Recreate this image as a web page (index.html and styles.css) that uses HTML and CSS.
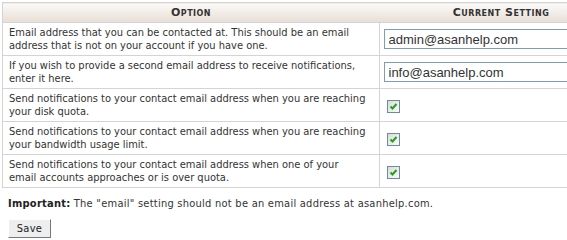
FILE: index.html
```html
<!DOCTYPE html>
<html lang="en">
<head>
<meta charset="UTF-8" />
<title>Contact Information</title>
<link rel="stylesheet" href="styles.css">
</head>
<body>

<!-- Contact settings table -->
<table class="settings">
  <thead>
    <tr>
      <th class="col-option">Option</th>
      <th class="col-setting">Current Setting</th>
    </tr>
  </thead>
  <tbody>
    <tr>
      <td>Email address that you can be contacted at. This should be an email address that is not on your account if you have one.</td>
      <td><input type="text" class="text-input" value="admin@asanhelp.com" /></td>
    </tr>
    <tr>
      <td>If you wish to provide a second email address to receive notifications, enter it here.</td>
      <td><input type="text" class="text-input" value="info@asanhelp.com" /></td>
    </tr>
    <tr>
      <td>Send notifications to your contact email address when you are reaching your disk quota.</td>
      <td><span class="check"><svg width="9" height="9" viewBox="0 0 9 9"><path d="M1.5 4.5 L3.5 6.5 L7.5 2" fill="none" stroke="#21a121" stroke-width="2"/></svg></span></td>
    </tr>
    <tr>
      <td>Send notifications to your contact email address when you are reaching your bandwidth usage limit.</td>
      <td><span class="check"><svg width="9" height="9" viewBox="0 0 9 9"><path d="M1.5 4.5 L3.5 6.5 L7.5 2" fill="none" stroke="#21a121" stroke-width="2"/></svg></span></td>
    </tr>
    <tr>
      <td>Send notifications to your contact email address when one of your email accounts approaches or is over quota.</td>
      <td><span class="check"><svg width="9" height="9" viewBox="0 0 9 9"><path d="M1.5 4.5 L3.5 6.5 L7.5 2" fill="none" stroke="#21a121" stroke-width="2"/></svg></span></td>
    </tr>
  </tbody>
</table>

<div class="footer">
  <p class="note"><b>Important:</b> The "email" setting should not be an email address at asanhelp.com.</p>
  <button class="save-button">Save</button>
</div>

</body>
</html>
```

FILE: styles.css
```css
body {
  margin: 0;
  padding: 2px;
  overflow: hidden;
  font-family: "DejaVu Sans Condensed", "DejaVu Sans", Tahoma, sans-serif;
  font-size: 11px;
  color: #333;
  background: #fff;
}

.settings {
  width: 622px;
  border-collapse: collapse;
  border: 1px solid #d4d4d4;
}

.settings th {
  height: 19px;
  padding: 0 6px;
  background: linear-gradient(#fbfaf9, #e8ded4);
  font-family: "DejaVu Sans", Verdana, sans-serif;
  font-variant: small-caps;
  font-weight: bold;
  font-size: 11px;
  letter-spacing: 0.5px;
  color: #333;
  text-align: center;
}
.col-option {
  width: 364px;
}

.settings td {
  padding: 3px 6px;
  line-height: 13px;
  border-top: 1px solid #d4d4d4;
  border-left: 1px solid #d4d4d4;
  vertical-align: middle;
}
.settings td:first-child {
  padding-right: 13px;
}

.text-input {
  width: 230px;
  height: 20px;
  box-sizing: border-box;
  margin: 0 0 0 -2px;
  padding: 1px 4px;
  border: 1px solid #7f9db9;
  font-family: "Liberation Sans", Arial, sans-serif;
  font-size: 13px;
  color: #333;
}

/* XP style checked checkbox */
.check {
  display: inline-flex;
  align-items: center;
  justify-content: center;
  width: 11px;
  height: 11px;
  margin: 2px 0 0 1px;
  border: 1px solid #6f8aa6;
  background: linear-gradient(135deg, #dcdcd6, #fafaf8);
  vertical-align: middle;
}

.footer {
  padding: 0 6px;
}
.note {
  margin: 9px 0 9px;
  line-height: 13px;
  letter-spacing: 0.25px;
}
.note b {
  color: #222;
}

.save-button {
  width: 43px;
  height: 19px;
  padding: 0;
  background: #eeeeee;
  border: 1px solid;
  border-color: #fff #777 #777 #fff;
  font-family: "DejaVu Sans Condensed", "DejaVu Sans", sans-serif;
  font-size: 11px;
  letter-spacing: 0.3px;
  color: #222;
}
```
